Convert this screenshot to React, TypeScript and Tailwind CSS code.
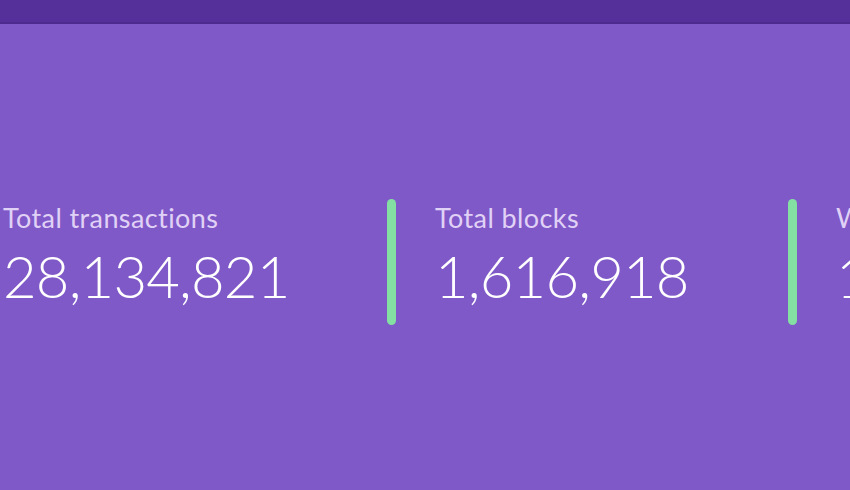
import React from 'react'

const stats = [
  { label: 'Total transactions', value: '28,134,821' },
  { label: 'Total blocks', value: '1,616,918' },
  { label: 'Wallet addresses', value: '1,204,557' },
]

function Stat({ label, value }: { label: string; value: string }) {
  return (
    <div className="flex flex-col pt-[4px]">
      <span className="text-[27px] leading-[30px] text-[#e0d2f6] whitespace-nowrap tracking-[0.4px]">
        {label}
      </span>
      <span className="mt-[11px] text-[58px] leading-[64px] font-light text-white whitespace-nowrap tracking-[-0.8px]">
        {value}
      </span>
    </div>
  )
}

export default function App() {
  return (
    <div
      className="w-[850px] h-[490px] overflow-hidden bg-[#8059c8]"
      style={{ fontFamily: 'Lato, "Noto Sans", sans-serif' }}
    >
      {/* top bar */}
      <header className="h-[24px] bg-[#55309a] border-b-2 border-[#4d2a8e]" />

      {/* stats row */}
      <section className="flex items-start pt-[175px] pl-[3px]">
        <div className="w-[384px] shrink-0">
          <Stat {...stats[0]} />
        </div>
        <div className="w-[9px] h-[126px] rounded-full bg-[#84e0a2] shrink-0" />
        <div className="w-[392px] shrink-0 pl-[39px]">
          <Stat {...stats[1]} />
        </div>
        <div className="w-[9px] h-[126px] rounded-full bg-[#84e0a2] shrink-0" />
        <div className="shrink-0 pl-[39px] w-[60px] overflow-hidden">
          <Stat {...stats[2]} />
        </div>
      </section>
    </div>
  )
}
